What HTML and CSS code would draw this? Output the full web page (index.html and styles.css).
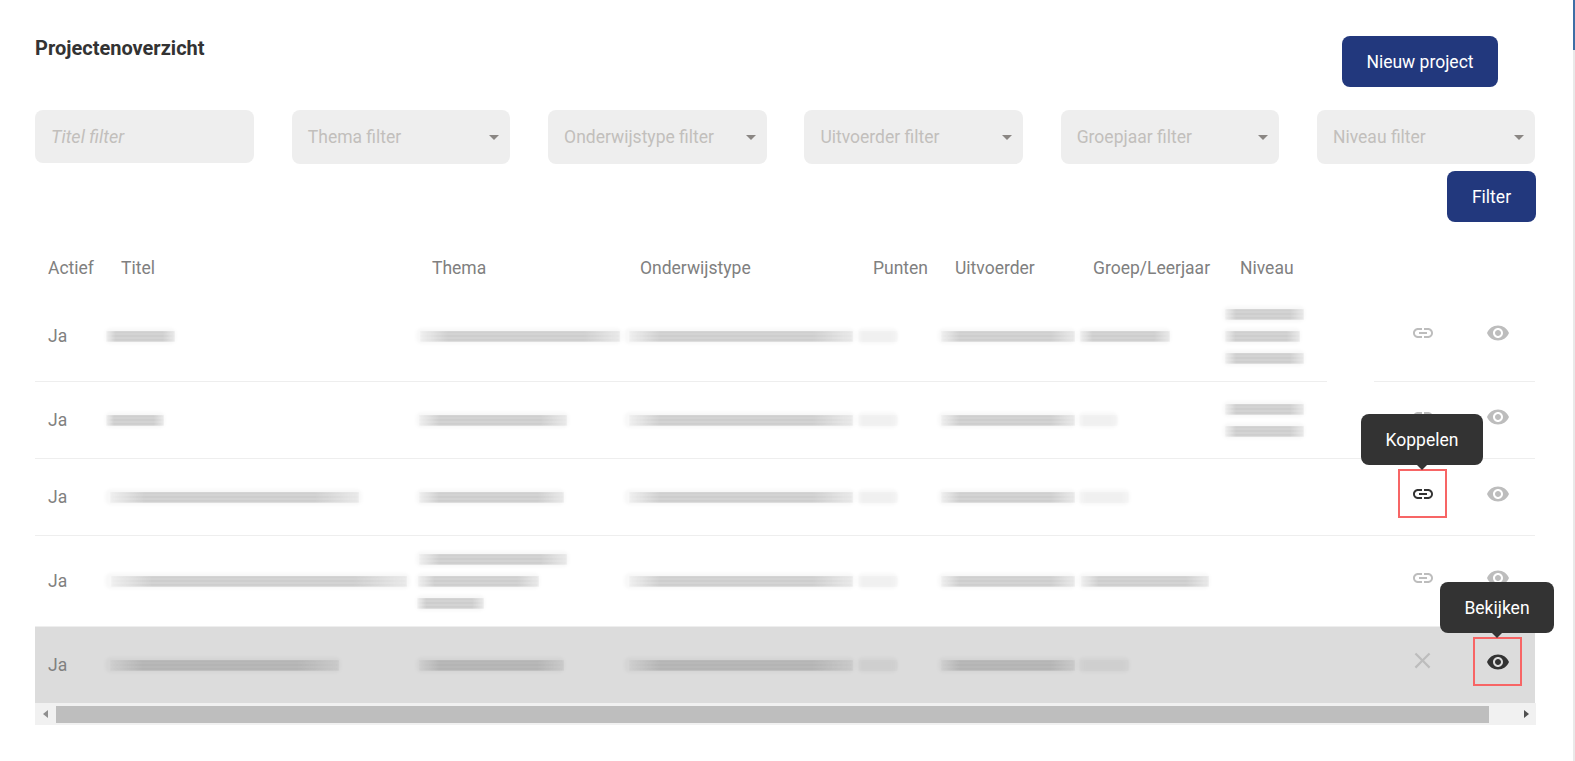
FILE: index.html
```html
<!DOCTYPE html>
<html lang="nl">
<head>
<meta charset="utf-8">
<title>Projectenoverzicht</title>
<link rel="stylesheet" href="styles.css">
</head>
<body>
<svg class="sprite" width="0" height="0" aria-hidden="true">
  <symbol id="i-link" viewBox="0 0 24 24"><path d="M3.9 12c0-1.71 1.39-3.1 3.1-3.1h4V7H7c-2.76 0-5 2.24-5 5s2.24 5 5 5h4v-1.9H7c-1.71 0-3.1-1.39-3.1-3.1zM8 13h8v-2H8v2zm9-6h-4v1.9h4c1.71 0 3.1 1.39 3.1 3.1s-1.39 3.1-3.1 3.1h-4V17h4c2.76 0 5-2.24 5-5s-2.24-5-5-5z"/></symbol>
  <symbol id="i-eye" viewBox="0 0 24 24"><path d="M12 4.5C7 4.5 2.73 7.61 1 12c1.73 4.39 6 7.5 11 7.5s9.27-3.11 11-7.5c-1.73-4.39-6-7.5-11-7.5zM12 17c-2.76 0-5-2.24-5-5s2.24-5 5-5 5 2.24 5 5-2.24 5-5 5zm0-8c-1.66 0-3 1.34-3 3s1.34 3 3 3 3-1.34 3-3-1.34-3-3-3z"/></symbol>
  <symbol id="i-x" viewBox="0 0 24 24"><path d="M19 6.41 17.59 5 12 10.59 6.41 5 5 6.41 10.59 12 5 17.59 6.41 19 12 13.41 17.59 19 19 17.59 13.41 12z"/></symbol>
</svg>

<main class="page">
  <header class="top">
    <h1 class="title">Projectenoverzicht</h1>
    <button class="btn btn-new">Nieuw project</button>
  </header>

  <section class="filters">
    <input class="field-input" type="text" placeholder="Titel filter">
    <div class="select"><span>Thema filter</span></div>
    <div class="select"><span>Onderwijstype filter</span></div>
    <div class="select"><span>Uitvoerder filter</span></div>
    <div class="select"><span>Groepjaar filter</span></div>
    <div class="select"><span>Niveau filter</span></div>
  </section>
  <div class="filter-action"><button class="btn btn-filter">Filter</button></div>

  <table class="grid">
    <colgroup>
      <col class="c-actief"><col class="c-titel"><col class="c-thema"><col class="c-type"><col class="c-punten"><col class="c-uit"><col class="c-groep"><col class="c-niveau"><col class="c-gap"><col class="c-link"><col class="c-eye">
    </colgroup>
    <thead>
      <tr>
        <th class="first">Actief</th><th>Titel</th><th>Thema</th><th>Onderwijstype</th><th>Punten</th><th class="th-wide">Uitvoerder</th><th class="th-groep">Groep/Leerjaar</th><th class="th-wide">Niveau</th><th></th><th></th><th></th>
      </tr>
    </thead>
    <tbody>
      <tr>
        <td class="first">Ja</td>
        <td><span class="blur w71"></span></td>
        <td><span class="blur w206"></span></td>
        <td><span class="blur w231"></span></td>
        <td><span class="blur faint w41"></span></td>
        <td><span class="blur w138"></span></td>
        <td><span class="blur w93"></span></td>
        <td><span class="blur w82"></span><span class="blur w78"></span><span class="blur w82"></span></td>
        <td class="no-line"></td>
        <td class="act act-link"><button class="icon-btn"><svg class="ico"><use href="#i-link"/></svg></button></td>
        <td class="act act-eye"><button class="icon-btn"><svg class="ico"><use href="#i-eye"/></svg></button></td>
      </tr>
      <tr>
        <td class="first">Ja</td>
        <td><span class="blur w60"></span></td>
        <td><span class="blur w153"></span></td>
        <td><span class="blur w231"></span></td>
        <td><span class="blur faint w41"></span></td>
        <td><span class="blur w138"></span></td>
        <td><span class="blur faint w40"></span></td>
        <td><span class="blur w82"></span><span class="blur w82"></span></td>
        <td></td>
        <td class="act act-link"><button class="icon-btn"><svg class="ico"><use href="#i-link"/></svg></button></td>
        <td class="act act-eye"><button class="icon-btn"><svg class="ico"><use href="#i-eye"/></svg></button></td>
      </tr>
      <tr>
        <td class="first">Ja</td>
        <td><span class="blur w257"></span></td>
        <td><span class="blur w149"></span></td>
        <td><span class="blur w231"></span></td>
        <td><span class="blur faint w41"></span></td>
        <td><span class="blur w138"></span></td>
        <td><span class="blur faint w52"></span></td>
        <td></td>
        <td></td>
        <td class="act act-link">
          <button class="icon-btn is-active"><svg class="ico"><use href="#i-link"/></svg><span class="tip tip-link">Koppelen</span></button>
        </td>
        <td class="act act-eye"><button class="icon-btn"><svg class="ico"><use href="#i-eye"/></svg></button></td>
      </tr>
      <tr>
        <td class="first">Ja</td>
        <td><span class="blur w305"></span></td>
        <td><span class="blur w153"></span><span class="blur w124"></span><span class="blur w69"></span></td>
        <td><span class="blur w231"></span></td>
        <td><span class="blur faint w41"></span></td>
        <td><span class="blur w138"></span></td>
        <td><span class="blur w132"></span></td>
        <td></td>
        <td></td>
        <td class="act act-link"><button class="icon-btn"><svg class="ico"><use href="#i-link"/></svg></button></td>
        <td class="act act-eye"><button class="icon-btn"><svg class="ico"><use href="#i-eye"/></svg></button></td>
      </tr>
      <tr class="selected">
        <td class="first">Ja</td>
        <td><span class="blur w236"></span></td>
        <td><span class="blur w149"></span></td>
        <td><span class="blur w231"></span></td>
        <td><span class="blur faint w41"></span></td>
        <td><span class="blur w138"></span></td>
        <td><span class="blur faint w52"></span></td>
        <td></td>
        <td></td>
        <td class="act act-link"><button class="icon-btn"><svg class="ico ico-x"><use href="#i-x"/></svg></button></td>
        <td class="act act-eye">
          <button class="icon-btn is-active"><svg class="ico"><use href="#i-eye"/></svg><span class="tip tip-eye">Bekijken</span></button>
        </td>
      </tr>
    </tbody>
  </table>

  <div class="hscroll">
    <span class="arrow arrow-left"></span>
    <span class="thumb"></span>
    <span class="arrow arrow-right"></span>
  </div>
</main>

<div class="page-scroll"><span class="page-thumb"></span></div>
</body>
</html>
```
FILE: styles.css
```css
* { box-sizing: border-box; }
html, body { height: 100%; }
body {
  margin: 0;
  overflow: hidden;
  background: #fff;
  font-family: Roboto, "Liberation Sans", sans-serif;
  font-size: 17.5px;
  color: #808080;
}
.sprite { position: absolute; }
.page { width: 1536px; padding: 36px 0 0 35px; }

.top { display: flex; justify-content: space-between; align-items: flex-start; height: 74px; padding-right: 38px; }
.title { margin: 0; font-size: 20px; font-weight: 700; line-height: 24px; color: #333; }

.btn {
  height: 51px;
  border: 0;
  border-radius: 8px;
  background: #22387d;
  color: #fff;
  font: 400 17.5px Roboto, sans-serif;
}
.btn-new { width: 156px; }
.btn-filter { width: 89px; }

.filters { display: grid; grid-template-columns: 219px repeat(5, 218.5px); column-gap: 37.8px; }
.field-input {
  width: 100%;
  height: 53px;
  border: 0;
  border-radius: 8px;
  background: #eee;
  padding: 0 16px;
  font: italic 400 18px Roboto, sans-serif;
  outline: 0;
}
.field-input::placeholder { color: #c2bfbc; opacity: 1; }
.select {
  position: relative;
  display: flex;
  align-items: center;
  height: 54px;
  border-radius: 8px;
  background: #eee;
  padding: 0 16px;
  font-size: 17.5px;
  color: #c2bfbc;
}
.select::after {
  content: "";
  position: absolute;
  right: 11px;
  top: 25px;
  border-left: 5px solid transparent;
  border-right: 5px solid transparent;
  border-top: 5px solid #8a8683;
}
.filter-action { display: flex; justify-content: flex-end; margin-top: 7px; }

.grid { width: 1500px; table-layout: fixed; border-collapse: separate; border-spacing: 0; margin-top: 1px; }
.c-actief { width: 70px; }
.c-titel { width: 311px; }
.c-thema { width: 208px; }
.c-type { width: 233px; }
.c-punten { width: 81px; }
.c-uit { width: 140px; }
.c-groep { width: 145px; }
.c-niveau { width: 104px; }
.c-gap { width: 47px; }
.c-link { width: 85px; }
.c-eye { width: 76px; }

.grid th {
  height: 68px;
  padding: 34px 0 12px 16px;
  font-weight: 400;
  line-height: 22px;
  text-align: left;
  white-space: nowrap;
  color: #808080;
}
.grid th.first, .grid td.first { padding-left: 13px; }
.grid th.th-groep { padding-left: 15px; }
.grid th.th-wide { padding-left: 17px; }
.grid td {
  padding: 12px 0;
  border-bottom: 1px solid #eee;
  vertical-align: middle;
}
.grid td.first { line-height: 22px; }
.grid td.no-line { border-bottom: 0; }
.grid td.act { padding: 10px 0 17px; }
.grid td.act-link { padding-left: 24px; }
.grid td.act-eye { padding-left: 14px; }
.selected td { background: #dcdcdc; border-bottom: 0; }

.blur { position: relative; display: block; height: 22px; }
.blur::before {
  content: "";
  position: absolute;
  left: 0; right: 0; top: 3px; bottom: 3px;
  border-radius: 6px;
  background: rgba(0, 0, 0, .028);
  filter: blur(1.5px);
}
.blur::after {
  content: "";
  position: absolute;
  left: 2%; right: 1%; top: 6px; bottom: 5px;
  background: repeating-linear-gradient(180deg, rgba(100, 100, 100, .38) 0 2px, rgba(100, 100, 100, .16) 2px 4px);
  -webkit-mask-image: linear-gradient(90deg, rgba(0, 0, 0, .2), #000 14%, #000 82%, rgba(0, 0, 0, .35));
  mask-image: linear-gradient(90deg, rgba(0, 0, 0, .2), #000 14%, #000 82%, rgba(0, 0, 0, .35));
  filter: blur(.9px);
}
.blur.faint::after { background: rgba(95, 95, 95, .05); }
.w40 { width: 40px; } .w41 { width: 41px; } .w52 { width: 52px; } .w60 { width: 60px; }
.w69 { width: 69px; } .w71 { width: 71px; } .w78 { width: 78px; } .w82 { width: 82px; }
.w93 { width: 93px; } .w124 { width: 124px; } .w132 { width: 132px; } .w138 { width: 138px; }
.w149 { width: 149px; } .w153 { width: 153px; } .w206 { width: 206px; } .w231 { width: 231px; }
.w236 { width: 236px; } .w257 { width: 257px; } .w305 { width: 305px; }

.icon-btn {
  position: relative;
  display: flex;
  align-items: center;
  justify-content: center;
  width: 49px;
  height: 49px;
  padding: 0;
  border: 2px solid transparent;
  background: none;
  color: #bdbdbd;
}
.ico { display: block; width: 24px; height: 24px; fill: currentColor; }
.ico-x { width: 27px; height: 27px; margin-top: -2px; }
.icon-btn.is-active { border-color: #f76565; color: #333; }

.tip {
  position: absolute;
  bottom: 51px;
  display: flex;
  align-items: center;
  justify-content: center;
  height: 51px;
  border-radius: 8px;
  background: #333;
  color: #fff;
  font: 400 17.5px Roboto, sans-serif;
  white-space: nowrap;
}
.tip::after {
  content: "";
  position: absolute;
  top: 100%;
  left: 50%;
  margin-left: -5px;
  border-left: 5px solid transparent;
  border-right: 5px solid transparent;
  border-top: 5px solid #333;
}
.tip-link { left: -39px; width: 122px; }
.tip-eye { left: -35px; width: 114px; }

.hscroll { display: flex; align-items: center; width: 1501px; height: 22px; background: #f1f1f1; }
.thumb { width: 1433px; height: 17px; background: #bebebe; }
.arrow { flex: 1; display: flex; justify-content: center; }
.arrow::before { content: ""; border-top: 4.5px solid transparent; border-bottom: 4.5px solid transparent; }
.arrow-left { flex: 0 0 21px; }
.arrow-left::before { border-right: 5px solid #8f8f8f; }
.arrow-right::before { border-left: 5px solid #505050; margin-left: 27px; }

.page-scroll { position: fixed; top: 0; right: 0; width: 2px; height: 100%; background: #e9e9e9; }
.page-thumb { display: block; height: 50px; background: #3d6ea5; }
```
